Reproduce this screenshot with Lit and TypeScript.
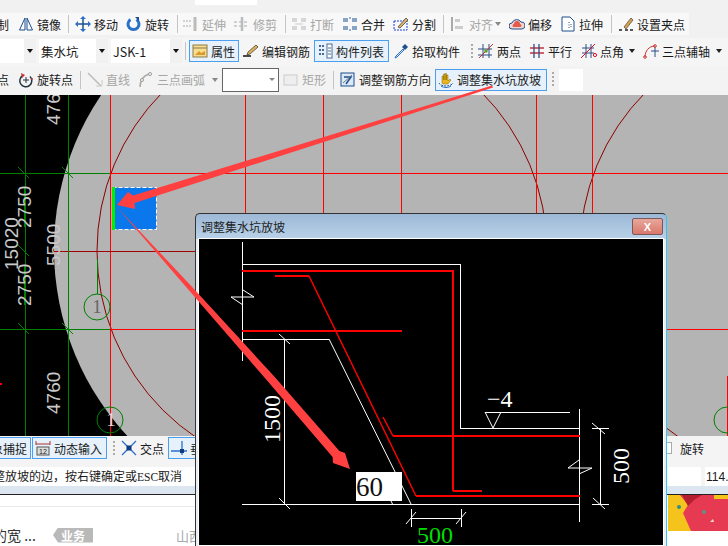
import { LitElement, css, html, svg } from "lit"
import { customElement } from "lit/decorators.js"

type Item = {
  x: number
  icon?: string
  text?: string
  on?: boolean
  off?: boolean
  sep?: boolean
  grip?: boolean
  arrow?: boolean
  combo?: string
  box?: boolean
  blank?: boolean
  check?: boolean
}

const NAVY = "#1d4f8f"
const BLUE = "#2a6fc9"

const ICONS: Record<string, unknown> = {
  mirror: svg`<path d="M7 2 1.500 14H7zM9 2l5.500 12H9z" fill="none" stroke=${NAVY}/>`,
  move: svg`<path d="M8 1v14M1 8h14" stroke=${NAVY} stroke-width="1.500"/><path d="M8 0l3 3H5zM8 16l3-3H5zM0 8l3-3v6zM16 8l-3-3v6z" fill=${BLUE}/>`,
  rotate: svg`<path d="M4.500 3.500a5.500 5.500 0 1 0 6 0" fill="none" stroke=${BLUE} stroke-width="3"/><path d="M9 1h4v4z" fill=${NAVY}/>`,
  extend: svg`<path d="M0 5h9M0 10h9" stroke="#aaa" stroke-dasharray="2 1"/><path d="M12 1v14" stroke="#bbb" stroke-width="3"/>`,
  trim: svg`<path d="M0 6h14M0 10h14" stroke="#aaa" stroke-dasharray="3 2"/><path d="M8 1v14" stroke="#bbb" stroke-width="2.500"/>`,
  split: svg`<path d="M1 3h5M1 5h5M10 3h5M10 5h5M1 11h5M1 13h5M10 11h5M10 13h5" stroke="#b5b5b5"/><path d="M4 8h8" stroke="#ccc"/>`,
  merge: svg`<path d="M1 3h5M1 5h5M10 3h5M10 5h5M1 11h5M1 13h5M10 11h5M10 13h5" stroke=${NAVY}/><path d="M8 1v2M8 13v2" stroke=${BLUE}/>`,
  cut: svg`<rect x="1" y="5" width="13" height="9" fill="none" stroke="#1c3fe0" stroke-dasharray="2 1"/><path d="M5 11 13 2l2 2-8 8z" fill="#d9b46a" stroke="#333" stroke-width=".7"/>`,
  align: svg`<path d="M2 1v14" stroke="#aaa" stroke-width="2"/><path d="M5 3h5v3H5zM5 10h8v3H5z" fill="#ccc"/>`,
  offset: svg`<path d="M3 13a3 3 0 0 1 0-6 5 5 0 0 1 9-1 3.500 3.500 0 0 1 1 7z" fill="#f4d6d0" stroke=${NAVY}/><path d="M5 11a1.500 1.500 0 0 1 0-3 3 3 0 0 1 6 0 1.500 1.500 0 0 1 0 3z" fill="#e25b4c"/>`,
  stretch: svg`<path d="M2 1h8l4 4v10H2z" fill="#fff" stroke=${NAVY}/><path d="M9 6v7" stroke=${NAVY} stroke-dasharray="1 1.500"/><path d="M11 8v4" stroke="#555" stroke-dasharray="1 1"/>`,
  grips: svg`<path d="M1 14h3M7 14h3M12 14h3" stroke="#222" stroke-width="1.500"/><path d="M6 11 13 2l2 2-7 9z" fill="#d8a24a" stroke="#444" stroke-width=".7"/>`,
  props: svg`<rect x="1" y="2" width="14" height="12" fill="#f7dd8e" stroke="#8a7a4c"/><path d="M1 5h14" stroke="#8a7a4c"/><path d="M3 12l4-4 2 2 4-2v4z" fill="#d99a2b"/>`,
  edit: svg`<path d="M0 13h8" stroke="#111" stroke-width="1.500"/><path d="M4 12l1-3 8-7 2 2-8 7z" fill="#e1b159" stroke="#333" stroke-width=".7"/>`,
  list: svg`<rect x="10" y="1" width="5" height="14" fill="#fff" stroke="#4a6a94"/><path d="M2 3h5M2 7h5M2 11h5" stroke="#4a6a94" stroke-width="2" stroke-dasharray="2 1"/><path d="M11 5h3M11 8h3M11 11h3" stroke="#4a6a94"/>`,
  pick: svg`<path d="M10 6 3 13l-1 2 2-1 7-7z" fill="#d8e6f6" stroke=${BLUE}/><path d="M9 4l3-3 3 3-3 3z" fill=${NAVY}/>`,
  two: svg`<path d="M0 6h14M0 12h14M5 1v14M11 1v14" stroke="#2d4f86"/><path d="M1 15 15 1" stroke="#c33"/><circle cx="8" cy="8" r="1.800" fill="#5da02d"/>`,
  parallel: svg`<path d="M1 5h14M1 10h14" stroke="#c5333a" stroke-width="1.300"/><path d="M5 1v14M10 1v14" stroke="#2d4f86" stroke-width="1.300"/>`,
  angle: svg`<path d="M1 5h12M1 10h12M5 1v14M10 1v14" stroke="#2d4f86"/><path d="M0 15 14 1" stroke="#d12"/><circle cx="14" cy="12" r="1.600" fill="none" stroke="#d12"/>`,
  axis: svg`<path d="M2 14C2 8 6 3 12 3" fill="none" stroke="#c33"/><path d="M8 8h8M12 4v10" stroke="#2d4f86"/><circle cx="2" cy="14" r="1.300" fill="none" stroke="#c33"/><circle cx="12" cy="3" r="1.300" fill="none" stroke="#c33"/>`,
  rotpt: svg`<path d="M5 3.500a6 6 0 1 0 7 1" fill="none" stroke="#234" stroke-width="1.500"/><path d="M8 5v6M5 8h6" stroke="#234"/><path d="M3 1l4 2-3 3z" fill="#c33"/><circle cx="14" cy="7" r="1" fill="#c33"/>`,
  line: svg`<path d="M1 1 14 14" stroke="#bbb" stroke-width="1.500"/><path d="M9 14h6V8" fill="none" stroke="#ccc"/>`,
  arc: svg`<path d="M2 15C2 8 6 3 12 2" fill="none" stroke="#aaa" stroke-width="1.500"/><circle cx="12" cy="2" r="1.500" fill="#fff" stroke="#999"/><circle cx="4" cy="8" r="1.500" fill="#fff" stroke="#999"/>`,
  rect: svg`<rect x="1" y="3" width="13" height="10" fill="#eee" stroke="#ccc"/>`,
  dir: svg`<rect x="1" y="1" width="13" height="13" fill="#dbe8f6" stroke=${NAVY}/><path d="M4 5h7L6 12" fill="none" stroke=${NAVY} stroke-width="1.500"/><path d="M3 11l9-8" stroke="#777"/>`,
  hand: svg`<path d="M4 11V4h1.500v4V2H7v6V1.500h1.500V8V3H10v6l2-2 1 1-3 4H5z" fill="#e8b51e" stroke="#8a6a10" stroke-width=".5"/><path d="M1 11c2 4 12 4 14 0" fill="none" stroke=${NAVY} stroke-dasharray="2 1"/><path d="M3 14c3 2 7 2 10 0" stroke=${BLUE} fill="none"/>`,
  dyn: svg`<path d="M1 4h14M1 1v4M15 1v4" stroke="#a33"/><rect x="2" y="7" width="12" height="8" fill="#ddd" stroke="#555"/><text x="4" y="14" font-size="7" font-family="Liberation Sans" fill="#222">12</text>`,
  cross: svg`<path d="M1 1l14 14M15 1 1 15" stroke=${BLUE} stroke-width="1.300"/><rect x="5.500" y="5.500" width="5" height="5" fill="#103a80"/>`,
  perp: svg`<path d="M0 11h16M11 1v14" stroke=${BLUE} stroke-width="1.300"/><rect x="9" y="9" width="4" height="4" fill="#103a80"/>`,
}

const ROW_ONE: Item[] = [
  { x: -3, text: "制" },
  { x: 18, icon: "mirror", text: "镜像" },
  { x: 68, sep: true },
  { x: 75, icon: "move", text: "移动" },
  { x: 126, icon: "rotate", text: "旋转" },
  { x: 177, sep: true },
  { x: 183, icon: "extend", text: "延伸", off: true },
  { x: 234, icon: "trim", text: "修剪", off: true },
  { x: 285, sep: true },
  { x: 291, icon: "split", text: "打断", off: true },
  { x: 342, icon: "merge", text: "合并" },
  { x: 393, icon: "cut", text: "分割" },
  { x: 443, sep: true },
  { x: 450, icon: "align", text: "对齐", off: true },
  { x: 494, arrow: true, off: true },
  { x: 509, icon: "offset", text: "偏移" },
  { x: 560, icon: "stretch", text: "拉伸" },
  { x: 611, sep: true },
  { x: 618, icon: "grips", text: "设置夹点" },
  { x: 689, blank: true },
]

const ROW_TWO: Item[] = [
  { x: 0, combo: "" },
  { x: 39, combo: "集水坑" },
  { x: 111, combo: "JSK-1" },
  { x: 185, sep: true },
  { x: 189, icon: "props", text: "属性", on: true },
  { x: 239, blank: true },
  { x: 243, icon: "edit", text: "编辑钢筋" },
  { x: 314, icon: "list", text: "构件列表", on: true },
  { x: 389, blank: true },
  { x: 393, icon: "pick", text: "拾取构件" },
  { x: 471, grip: true },
  { x: 478, icon: "two", text: "两点" },
  { x: 529, icon: "parallel", text: "平行" },
  { x: 581, icon: "angle", text: "点角" },
  { x: 628, arrow: true },
  { x: 643, icon: "axis", text: "三点辅轴" },
  { x: 715, arrow: true },
  { x: 728, blank: true },
]

const ROW_THREE: Item[] = [
  { x: -3, text: "点" },
  { x: 18, icon: "rotpt", text: "旋转点" },
  { x: 80, sep: true },
  { x: 87, icon: "line", text: "直线", off: true },
  { x: 138, icon: "arc", text: "三点画弧", off: true },
  { x: 211, arrow: true, off: true },
  { x: 222, box: true },
  { x: 279, blank: true },
  { x: 283, icon: "rect", text: "矩形", off: true },
  { x: 333, sep: true },
  { x: 340, icon: "dir", text: "调整钢筋方向" },
  { x: 435, icon: "hand", text: "调整集水坑放坡", on: true },
  { x: 547, blank: true },
  { x: 552, grip: true },
  { x: 728, blank: true },
]

const ROW_SNAP: Item[] = [
  { x: -24, text: "对象捕捉", on: true },
  { x: 31, blank: true },
  { x: 32, icon: "dyn", text: "动态输入", on: true },
  { x: 107, blank: true },
  { x: 113, grip: true },
  { x: 121, icon: "cross", text: "交点" },
  { x: 168, icon: "perp", text: "垂点", on: true },
  { x: 240, blank: true },
  { x: 661, check: true },
  { x: 680, text: "旋转" },
  { x: 728, blank: true },
]

// free drawing of the plan behind the dialog, in page coordinates
const plan = svg`
  <rect x="0" y="95" width="728" height="341" fill="#000"/>
  <circle cx="329" cy="249" r="275" fill="#b4b4b4"/>
  <rect x="329" y="95" width="399" height="341" fill="#b4b4b4"/>
  <g fill="none" stroke="#8b0000" stroke-width="1">
    <circle cx="322" cy="251" r="225"/>
    <circle cx="805" cy="251" r="225"/>
  </g>
  <g shape-rendering="crispEdges" stroke-width="1">
    <g stroke="#ff0000">
      <path d="M110.500 95v341M245.500 95v341M323.500 95v341M401.500 95v341M536.500 95v341M592.500 95v341"/>
      <path d="M110 173.500h618M110 329.500h618"/>
      <path d="M727.500 376v60"/>
    </g>
    <path d="M52 251.500h143" stroke="#a00000"/>
    <g stroke="#008000">
      <path d="M0 173.500h110M0 329.500h110M25.500 95v341M68.500 95v341M24 187v40M24 265v40"/>
      <path d="M97.500 259v35"/>
    </g>
  </g>
  <g stroke="#008000" stroke-width="1">
    <path d="M18 167l11 11M62 167l11 11M18 323l11 11M62 323l11 11M18 245l11 11"/>
    <circle cx="97" cy="307" r="13" fill="none"/>
    <circle cx="110" cy="420" r="13" fill="none"/>
    <circle cx="727" cy="420" r="13" fill="none"/>
  </g>
  <rect x="0" y="383" width="2" height="2" fill="#f00"/>
  <rect x="112.500" y="187.500" width="44" height="42" fill="#0a78ec" stroke="#fff" stroke-dasharray="4 2"/>
  <rect x="112" y="187" width="3" height="43" fill="#00f000"/>
  <g class="dim">
    <text transform="translate(60 125) rotate(-90)">4760</text>
    <text transform="translate(31 228) rotate(-90)">2750</text>
    <text transform="translate(18 270) rotate(-90)">15020</text>
    <text transform="translate(60 266) rotate(-90)">5500</text>
    <text transform="translate(31 306) rotate(-90)">2750</text>
    <text transform="translate(60 414) rotate(-90)">4760</text>
  </g>
  <text class="axis" x="97" y="313" text-anchor="middle" fill="#666">1</text>
  <text class="axis" x="111" y="426" text-anchor="middle" fill="#ddd">1</text>
`

// the section drawing inside the dialog, also in page coordinates
const section = svg`
  <g fill="none" stroke="#fff" stroke-width="1" shape-rendering="crispEdges">
    <path d="M242.500 243v119M242.500 265.500h218v164h119M579.500 410v113M242 505.500h337"/>
    <path d="M242 340.500h87M284.500 340v165M411.500 510v18M461.500 510v18M411 519.500h50M600.500 429v76M592 429.500h17M592 505.500h17M485 413.500h85"/>
  </g>
  <g fill="none" stroke="#fff" stroke-width="1">
    <path d="M243 291l11 7h-23l12 8M329 340l82 165M391 502l1.500 3"/>
    <path d="M279 335l11 10M279 499l11 11M406 525l10-12M456 525l10-12M592 424l13 11M593 499l12 11"/>
    <path d="M485 413l8 16 8-16M579 461l-11 8h24l-13 6"/>
  </g>
  <g fill="none" stroke="#f00" stroke-width="2">
    <path d="M242 272h211v220M453 492h29M416 497h164M242 332h160M275 277h34M393 437h187"/>
    <path d="M309 277l107 220M383 418l10 19" stroke-width="1.500"/>
  </g>
  <g class="label">
    <text transform="translate(280 444) rotate(-90)" fill="#fff">1500</text>
    <text transform="translate(629 485) rotate(-90)" fill="#fff">500</text>
    <text x="417" y="544" fill="#0d0">500</text>
    <text x="487" y="408" fill="#fff">−4</text>
  </g>
  <rect x="356" y="473" width="46" height="29" fill="#fff"/>
  <text class="input" x="356" y="497">60</text>
`

@customElement("app-root")
export class AppRoot extends LitElement {
  static styles = css`
    :host {
      display: block;
      position: relative;
      width: 728px;
      height: 546px;
      overflow: hidden;
      background: #f1f1f1;
      font-family: "Noto Sans CJK SC", "Liberation Sans", sans-serif;
      font-size: 12px;
      color: #1a1a1a;
    }

    .strip {
      height: 13px;
      background: #f1f1f1;
    }

    .strip-box {
      width: 62px;
      height: 5px;
      margin-left: 195px;
      background: #fff;
    }

    .row {
      display: flex;
      align-items: center;
      background: #f7f7f7;
    }

    .row-one {
      height: 22px;
      margin-bottom: 3px;
      background: linear-gradient(90deg, #f8f8f8 689px, #f1f1f1 689px);
    }

    .row-two {
      height: 28px;
      background: #f5f5f5;
      padding-bottom: 2px;
      box-sizing: border-box;
    }

    .row-three {
      height: 29px;
      background: #f3f3f3;
      padding-bottom: 2px;
      box-sizing: border-box;
    }

    .row-snap {
      height: 30px;
      padding-bottom: 6px;
      box-sizing: border-box;
      background: #f4f4f4;
    }

    .item {
      display: flex;
      flex: none;
      align-items: center;
      gap: 3px;
      height: 22px;
      box-sizing: border-box;
      white-space: nowrap;
    }

    .item svg {
      flex: none;
      width: 16px;
      height: 16px;
    }

    .off {
      color: #a6a6a6;
    }

    .on {
      padding-left: 2px;
      border: 1px solid #4a9ff0;
      background: #e6f1fb;
    }

    .sep::before {
      content: "";
      width: 1px;
      height: 18px;
      background: #c4c4c4;
    }

    .grip::before {
      content: "";
      width: 2px;
      height: 15px;
      background: repeating-linear-gradient(#aaa 0 2px, transparent 2px 4px);
    }

    .arrow::before {
      content: "";
      margin-left: 1px;
      border-left: 3.500px solid transparent;
      border-right: 3.500px solid transparent;
      border-top: 4px solid #222;
    }

    .arrow.off::before {
      border-top-color: #888;
    }

    .combo {
      justify-content: space-between;
      padding-left: 2px;
      margin-right: 3px;
      height: 24px;
      background: #fff;
      font-size: 12.500px;
    }

    .combo-btn {
      display: flex;
      align-items: center;
      justify-content: center;
      width: 12px;
      height: 100%;
      background: #f1f1f1;
    }

    .combo-btn::before {
      content: "";
      border-left: 3.500px solid transparent;
      border-right: 3.500px solid transparent;
      border-top: 4px solid #111;
    }

    .box {
      justify-content: flex-end;
      padding-right: 3px;
      height: 24px;
      background: #fff;
      border: 1px solid #666;
    }

    .box::before {
      content: "";
      border-left: 3px solid transparent;
      border-right: 3px solid transparent;
      border-top: 3px solid #888;
    }

    .check::before {
      content: "";
      width: 9px;
      height: 10px;
      background: #fff;
      border: 1px solid #aaa;
    }

    .end-box {
      width: 24px;
      height: 100%;
      margin-left: 2px;
      background: #fff;
    }

    .plan {
      display: block;
    }

    .plan .dim {
      font: 19px "Liberation Sans", sans-serif;
      fill: #c9c9c9;
    }

    .plan .axis {
      font: 19px "Liberation Serif", serif;
    }

    .status {
      display: grid;
      grid-template-columns: 1fr 33px 23px;
      gap: 4px;
      height: 19px;
      padding-top: 1px;
      background: #f4f4f4;
    }

    .field {
      display: flex;
      align-items: center;
      overflow: hidden;
      background: #fff;
      white-space: nowrap;
      font-size: 12px;
      line-height: 19px;
    }

    .status-text {
      margin-left: -7px;
    }

    .status-num {
      padding-left: 1px;
      font: 12px "Liberation Sans", sans-serif;
    }

    .latin {
      font-family: "Liberation Serif", serif;
      font-size: 11.500px;
    }

    .band {
      height: 8px;
      background: #dce6f1;
      border-bottom: 1px solid #222;
    }

    .web {
      display: flex;
      height: 51px;
      background: #fff;
    }

    .web-left {
      flex: 1;
      overflow: hidden;
    }

    .web-rule {
      height: 1px;
      margin-top: 11px;
      background: #e9e9e9;
    }

    .web-line {
      display: flex;
      align-items: center;
      height: 16px;
      margin: 20px 0 0 -7px;
      white-space: nowrap;
    }

    .web-title {
      width: 60px;
      font-size: 14px;
      color: #333;
    }

    .tag {
      display: flex;
      align-items: center;
      justify-content: center;
      width: 40px;
      height: 15px;
      background: #b9b9b9;
      color: #fff;
      font-size: 12px;
      font-weight: 700;
      clip-path: polygon(5px 0, 100% 0, 100% 100%, 5px 100%, 0 50%);
    }

    .web-place {
      margin-left: 83px;
      color: #aaa;
      font-size: 13px;
    }

    .ad {
      display: block;
      flex: none;
      width: 60px;
      height: 36px;
    }

    .dialog {
      position: absolute;
      left: 195px;
      top: 213px;
      width: 472px;
      height: 333px;
      box-sizing: border-box;
      padding: 0 3px;
      border: 1px solid #333;
      border-bottom: 0;
      border-right-color: #35c4ee;
      border-radius: 5px 5px 0 0;
      background: linear-gradient(#9db8d6, #b9d2e9 25px, #e9eef4 25px);
    }

    .dialog-head {
      display: flex;
      align-items: center;
      justify-content: space-between;
      height: 25px;
      padding-left: 2px;
      font-size: 12px;
      color: #222;
    }

    .dialog-close {
      display: flex;
      align-items: center;
      justify-content: center;
      width: 31px;
      height: 17px;
      border: 1px solid #7a5a5a;
      border-radius: 2px;
      box-sizing: border-box;
      background: linear-gradient(#e8a79c, #d9786a);
      color: #fff;
      font: 700 11px "Liberation Sans", sans-serif;
    }

    .dialog-body {
      display: block;
      width: 464px;
      height: 306px;
      background: #000;
      outline: 1px solid #fff;
    }

    .dialog-body .label {
      font: 24px "Liberation Serif", serif;
    }

    .dialog-body .input {
      font: 27px "Liberation Serif", serif;
      fill: #111;
    }

    .marks {
      position: absolute;
      inset: 0;
      pointer-events: none;
    }
  `

  _renderItem(item: Item, next: Item | undefined) {
    const width = next ? next.x - item.x : 0
    const style = `width:${width}px`
    const klass = [
      "item",
      item.on && "on",
      item.off && "off",
      item.sep && "sep",
      item.grip && "grip",
      item.arrow && "arrow",
      item.check && "check",
    ].filter(Boolean).join(" ")

    if (item.combo !== undefined) {
      return html`<div class="item combo" style="width:${width - 3}px"><span>${item.combo}</span><span class="combo-btn"></span></div>`
    }
    if (item.box) {
      return html`<div class="item box" style=${style}></div>`
    }
    return html`
      <div class=${klass} style=${style}>
        ${item.icon ? html`<svg viewBox="0 0 16 16">${ICONS[item.icon]}</svg>` : ""}
        ${item.text ? html`<span>${item.text}</span>` : ""}
        ${item.grip && item.x === 552 ? html`<span class="end-box"></span>` : ""}
      </div>
    `
  }

  _renderRow(items: Item[], klass: string) {
    const offset = `margin-left:${items[0].x}px`
    return html`
      <div class="row ${klass}">
        <div class="row" style=${offset}></div>
        ${items.slice(0, -1).map((item, i) => this._renderItem(item, items[i + 1]))}
      </div>
    `
  }

  render() {
    return html`
      <div class="strip"><div class="strip-box"></div></div>
      ${this._renderRow(ROW_ONE, "row-one")}
      ${this._renderRow(ROW_TWO, "row-two")}
      ${this._renderRow(ROW_THREE, "row-three")}
      <svg class="plan" width="728" height="341" viewBox="0 95 728 341">${plan}</svg>
      ${this._renderRow(ROW_SNAP, "row-snap")}
      <div class="status">
        <div class="field"><span class="status-text">整放坡的边，按右键确定或<span class="latin">ESC</span>取消</span></div>
        <div class="field"></div>
        <div class="field status-num">114.</div>
      </div>
      <div class="band"></div>
      <div class="web">
        <div class="web-left">
          <div class="web-rule"></div>
          <div class="web-line">
            <span class="web-title">的宽 ...</span>
            <span class="tag">业务</span>
            <span class="web-place">山西</span>
          </div>
        </div>
        <svg class="ad" viewBox="0 0 60 36">
          <rect width="60" height="36" fill="#e63a52"/>
          <path d="M0 0h12l8 10-5 8 8 18H0z" fill="#f5c41c"/>
          <path d="M14 0h20l-8 5-6 6z" fill="#b31f2e"/>
          <path d="M46 0h14v4H46z" fill="#f5c41c"/>
          <circle cx="11" cy="12" r="2" fill="#2f8f83"/>
          <circle cx="36" cy="17" r="2" fill="#5c8f96"/>
          <path d="M42 27l3-3 1 3z" fill="#f4d5c6"/>
        </svg>
      </div>
      <div class="dialog">
        <div class="dialog-head">
          <span>调整集水坑放坡</span>
          <span class="dialog-close">X</span>
        </div>
        <svg class="dialog-body" viewBox="199 240 464 306">${section}</svg>
      </div>
      <svg class="marks" width="728" height="546" viewBox="0 0 728 546">
        <path d="M492 85.500 133 195.500 128 192 117 205 135 209 134.500 203 493 87.500z" fill="#ff4040"/>
        <path d="M116 206 191.700 286.500 275 377.300 339.400 451 345 453 350 469 333 463 332.600 457 269 382.700 188.300 289.500z" fill="#ff4040"/>
      </svg>
    `
  }
}
